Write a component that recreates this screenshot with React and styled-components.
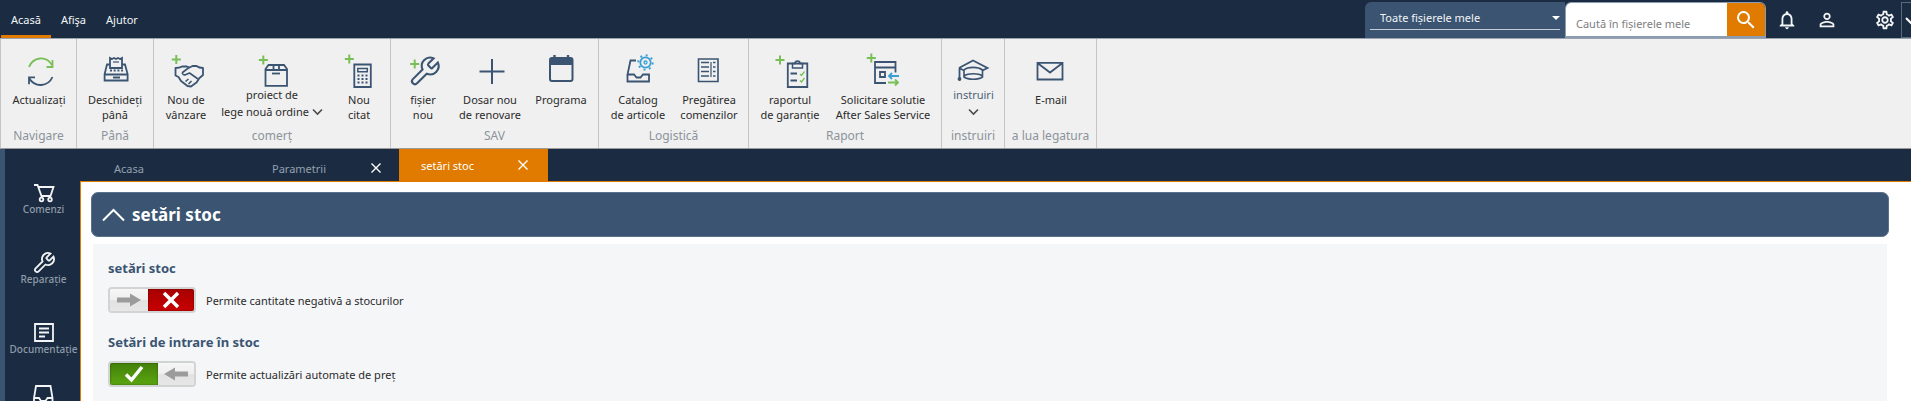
import React, { useState } from "react";
import styled, { createGlobalStyle } from "styled-components";
import {
  MdSearch,
  MdNotificationsNone,
  MdPersonOutline,
  MdOutlineSettings,
} from "react-icons/md";

const navy = "#1b2c42";
const blue = "#3a5472";
const orange = "#e07b00";
const green = "#78bf57";
const cyan = "#3c9fd4";

const GlobalStyle = createGlobalStyle`
  * {
    box-sizing: border-box;
  }

  html,
  body,
  #root {
    height: 100%;
  }

  body {
    margin: 0;
    overflow: hidden;
    font-family: "Noto Sans", "Open Sans", sans-serif;
    font-size: 11px;
    color: #2b2b2b;
  }

  button,
  input,
  select {
    margin: 0;
    padding: 0;
    border: none;
    background: none;
    font: inherit;
    color: inherit;
  }

  button {
    cursor: pointer;
  }
`;

const Page = styled.div`
  display: flex;
  flex-direction: column;
  height: 100%;
  background-color: ${navy};
`;

const Header = styled.header`
  display: flex;
  flex-shrink: 0;
  height: 38px;
  justify-content: space-between;
  color: #f2f4f6;
`;

const Menu = styled.nav`
  display: flex;
  padding-left: 1px;
`;

const MenuButton = styled.button`
  height: 38px;
  padding: 4px 10px 0;
  border-bottom: 3px solid ${(props) => (props.$active ? orange : "transparent")};
`;

const HeaderRight = styled.div`
  display: flex;
  padding-top: 2px;
`;

const FileFilter = styled.div`
  display: flex;
  width: 200px;
  padding: 0 5px 8px;
  background-color: ${blue};
  border-top-left-radius: 6px;
`;

const FilterField = styled.label`
  display: flex;
  flex: 1;
  align-items: center;
  padding-top: 4px;
  border-bottom: 1px solid #c5cdd6;
`;

const FilterSelect = styled.select`
  flex: 1;
  height: 22px;
  padding-left: 10px;
  appearance: none;
  color: #f2f4f6;
`;

const SearchForm = styled.form`
  display: flex;
  width: 201px;
  height: 36px;
  border: 1px solid #8b9bb0;
  border-bottom-width: 2px;
  border-radius: 6px 6px 0 0;
  overflow: hidden;
`;

const SearchInput = styled.input`
  flex: 1;
  min-width: 0;
  padding: 8px 10px 0;
  background-color: #fff;
  color: #333;

  &::placeholder {
    color: #808080;
    opacity: 1;
  }
`;

const SearchButton = styled.button`
  display: flex;
  width: 38px;
  align-items: center;
  justify-content: center;
  background-color: ${orange};
  color: #fff;
`;

const HeaderIcons = styled.div`
  display: flex;
  gap: 18px;
  padding-left: 10px;
`;

const IconButton = styled.button`
  display: flex;
  width: 22px;
  align-items: center;
  justify-content: center;
  margin-left: ${(props) => (props.$apart ? "18px" : "0")};
`;

const WindowButton = styled.button`
  width: 10px;
  margin-left: 5px;
  border: 1px solid #5a6a7d;
  border-right: none;
  overflow: hidden;
`;

const Ribbon = styled.div`
  display: flex;
  flex-shrink: 0;
  height: 111px;
  background-color: #f0f0f0;
  border-top: 1px solid #9aa3ad;
  border-bottom: 1px solid #9a9a9a;
  border-left: 1px solid #c4c4c4;
`;

const RibbonGroup = styled.section`
  display: flex;
  flex-direction: column;
  width: ${(props) => props.$width}px;
  border-right: 1px solid #c4c4c4;
`;

const RibbonItems = styled.div`
  display: flex;
  height: 88px;
  padding-left: 1px;
`;

const RibbonButton = styled.button`
  display: flex;
  flex-direction: column;
  align-items: center;
  flex-shrink: 0;
  width: ${(props) => props.$width}px;
  padding-top: 13px;
  line-height: ${(props) => (props.$menu ? 17 : 15)}px;
  color: ${(props) => (props.$muted ? "#4c5f78" : "#2b2b2b")};
  white-space: nowrap;
`;

const RibbonIcon = styled.svg`
  flex-shrink: 0;
  width: 40px;
  height: ${(props) => (props.$menu ? 34 : 40)}px;
  overflow: visible;
  fill: none;
  stroke: ${blue};
  stroke-width: 1.8;
`;

const GroupTitle = styled.h2`
  margin: 0;
  font-size: 12px;
  font-weight: 400;
  line-height: 18px;
  text-align: center;
  color: #8c939b;
  white-space: nowrap;
`;

const Main = styled.div`
  display: flex;
  flex: 1;
  min-height: 0;
`;

const Sidebar = styled.nav`
  display: flex;
  flex-direction: column;
  flex-shrink: 0;
  gap: 22px;
  width: 80px;
  padding: 32px 0 0 2px;
  border-left: 5px solid ${blue};
  overflow: hidden;
`;

const SidebarLink = styled.a`
  display: flex;
  flex-direction: column;
  flex-shrink: 0;
  align-items: center;
  height: 48px;
  font-size: 10px;
  font-weight: 500;
  line-height: 14px;
  color: #8f9baa;
  text-decoration: none;
`;

const SidebarIcon = styled.svg`
  flex-shrink: 0;
  width: 24px;
  height: 24px;
  margin-bottom: -3px;
  overflow: visible;
  fill: none;
  stroke: #f2f4f6;
  stroke-width: 1.8;
`;

const Workspace = styled.div`
  display: flex;
  flex: 1;
  flex-direction: column;
  min-width: 0;
`;

const Tabs = styled.div`
  display: flex;
  flex-shrink: 0;
  height: 32px;
  padding-left: 1px;
`;

const Tab = styled.div`
  display: flex;
  align-items: center;
  justify-content: space-between;
  width: ${(props) => props.$width}px;
  padding: ${(props) => (props.$active ? "0 19px 0 22px" : "6px 17px 0 33px")};
  background-color: ${(props) => (props.$active ? orange : "transparent")};
  color: ${(props) => (props.$active ? "#fff" : "#93a0b0")};
`;

const CloseButton = styled.button`
  display: flex;
  color: #fff;
`;

const Content = styled.main`
  flex: 1;
  padding: 10px 22px 0 10px;
  background-color: #fff;
  border-top: 1px solid ${orange};
  border-left: 1px solid ${orange};
  overflow: hidden;
`;

const PanelHeader = styled.button`
  display: flex;
  align-items: center;
  gap: 7px;
  width: 100%;
  height: 45px;
  padding: 0 10px;
  background-color: ${blue};
  border: 1px solid #5a718c;
  border-radius: 7px;
  font-size: 17px;
  font-weight: 700;
  color: #fff;
`;

const PanelBody = styled.div`
  height: 100%;
  margin: 7px 2px 0;
  padding: 14px 15px;
  background-color: #f5f6f8;
`;

const SettingTitle = styled.h3`
  margin: 0 0 9px;
  font-size: 13px;
  line-height: 20px;
  font-weight: 700;
  color: ${blue};
`;

const Setting = styled.label`
  display: flex;
  align-items: center;
  gap: 10px;
  height: 26px;
  margin-bottom: 19px;
  cursor: pointer;
`;

const ToggleBox = styled.span`
  position: relative;
  display: flex;
  width: 88px;
  height: 26px;
  border: 2px solid #d2d4d4;
  border-radius: 4px;
  overflow: hidden;
`;

const ToggleInput = styled.input`
  position: absolute;
  inset: 0;
  width: 100%;
  height: 100%;
  opacity: 0;
  cursor: pointer;
`;

const ToggleKnob = styled.span`
  display: flex;
  flex: 1;
  align-items: center;
  justify-content: center;
  background: linear-gradient(#f6f6f6 0%, #efefef 48%, #e3e3e3 52%, #e6e6e6 100%);
`;

const ToggleState = styled.span`
  display: flex;
  width: ${(props) => (props.$on ? 48 : 46)}px;
  align-items: center;
  justify-content: center;
  background: ${(props) =>
    props.$on ? "linear-gradient(#43800b, #5ba50f)" : "linear-gradient(#a80000, #c80000)"};
  box-shadow: inset 0 0 2px rgba(0, 0, 0, 0.5);
`;

const WRENCH =
  "M14.7 6.3a1 1 0 0 0 0 1.4l1.6 1.6a1 1 0 0 0 1.4 0l3.77-3.77a6 6 0 0 1-7.94 7.94l-6.91 6.91a2.12 2.12 0 0 1-3-3l6.91-6.91a6 6 0 0 1 7.94-7.94l-3.76 3.76z";

function Plus({ x, y }) {
  return <path d={`M${x - 4.5} ${y}h9M${x} ${y - 4.5}v9`} stroke={green} strokeWidth="2" />;
}

const icons = {
  refresh: (
    <>
      <path d="M10 15C14 5 27 3 33 13M27.5 15h6v-7" stroke={green} />
      <path d="M33.5 25C29 35 16 36 10 26M16 25.3h-6v7" />
    </>
  ),
  register: (
    <>
      <path d="M15 16V6l2 1 2-1 2 1 2-1 2 1 2-1v10z" />
      <path d="M15 12.5h-3L9.6 22v6.5h23V22L30 12.5h-3M9.6 22.5h23M18 25.5h7" />
      <path d="M15 18.5h13" strokeDasharray="2 1.7" />
      <path d="M18 10h6" strokeWidth="1.2" />
    </>
  ),
  handshake: (
    <>
      <Plus x={10.3} y={7.5} />
      <g strokeLinejoin="round">
        <path d="M9.5 16c3 0 5-.5 6.5-1.5h5l2.5 1 3-1.5h4c2 1.500 4 2 6.500 2v7l-3.500 3-3 4.500-5.500 4-3.500-.5-6.500-5-2.500-4-3-1.500z" />
        <path d="M23 15.500l-6.500 5c-.5 2 1.500 3 3.500 2l3.500-1.500 8.500 6M19.500 29.500l3-2.500M22.500 32l3-3" strokeWidth="1.6" />
      </g>
    </>
  ),
  box: (
    <>
      <Plus x={11.3} y={8} />
      <path d="M13.5 17l3-4H32l3 4v16.800H13.500zM13.500 18H35M21.500 13v5M27 13v5" />
      <path d="M20 21.500h8" />
    </>
  ),
  calculator: (
    <>
      <Plus x={10.3} y={7} />
      <path d="M15.300 12.500h16.500V35H15.300z" />
      <path d="M18.800 16.500h9.500v3.300h-9.500z" strokeWidth="1.5" />
      <path d="M18.500 23.500h11M18.500 27h11M18.500 30.500h11" strokeDasharray="2 2" />
    </>
  ),
  wrench: (
    <>
      <Plus x={11.7} y={12} />
      <path d={WRENCH} transform="translate(4.8 2.8) scale(1.4)" strokeWidth="1.5" />
    </>
  ),
  plus: <path d="M9.5 19.5h25M22 7v25" strokeWidth="2" />,
  calendar: (
    <>
      <rect x="9" y="6" width="22.5" height="23" rx="2" strokeWidth="2" />
      <path d="M9 10h22.5" strokeWidth="6" />
      <path d="M13.500 3v5M27 3v5" strokeWidth="2.4" />
    </>
  ),
  catalog: (
    <>
      <path d="M18 8.500h-5.500l-3 14h6.500l2.500 3h4l2.500-3H31v7H9.500v-7" />
      <circle cx="27.5" cy="10.5" r="5.2" stroke={cyan} />
      <circle cx="27.5" cy="10.5" r="1.5" stroke={cyan} strokeWidth="1.3" />
      <circle cx="27.5" cy="10.5" r="7.2" stroke={cyan} strokeWidth="2" strokeDasharray="2 3.655" />
    </>
  ),
  orders: (
    <>
      <path d="M9.500 7H29v22.500H9.500z" strokeWidth="1.6" />
      <path d="M12 10.500h8M12 15h8M12 19.500h8M12 24h8M24 10.500h2.500M24 15h2.500M24 19.500h2.500M24 24h2.500" strokeWidth="1.5" />
      <path d="M22 10v15" strokeWidth="1.2" />
    </>
  ),
  warranty: (
    <>
      <Plus x={10} y={8} />
      <path d="M17.800 11.500h19.500V35H17.800z" />
      <path d="M22.500 11.500V16h10v-4.500H30a2.500 2.500 0 0 0-5 0z" strokeWidth="1.5" />
      <path d="M20.500 21.500H27M20.500 28.500H27" />
      <path d="M30 22l1.500 1.500 3-4M30 28.500l1.500 1.500 3-4" stroke={green} strokeWidth="1.3" />
    </>
  ),
  afterSales: (
    <>
      <Plus x={8.3} y={6} />
      <path d="M23 31H12V10h20.500v10.500M12 15.500h20.500M17 20h5v5h-5z" />
      <path d="M36 24H27M29 21l-3 3 3 3" stroke={cyan} />
      <path d="M25 30.500h9M32 27.500l3 3-3 3" stroke={green} />
    </>
  ),
  training: (
    <>
      <path d="M5 16l14-7.500L33.500 16l-5 2.500M5 16l5 2.500" />
      <path d="M10 25v-7c4-3.500 14-3.500 18.500 0v7c-4 3-14.500 3-18.500 0zM10 24c4-3 14.500-3 18.500 0" strokeWidth="1.6" />
      <path d="M5.500 16.500v11" />
      <circle cx="5.500" cy="27" r="1" />
    </>
  ),
  mail: <path d="M6.500 10.800h25V27.500h-25zM6.500 11L19 20.500 31.500 11" />,
};

const groups = [
  {
    title: "Navigare",
    width: 76,
    items: [{ icon: "refresh", lines: ["Actualizați"], width: 74 }],
  },
  {
    title: "Până",
    width: 77,
    items: [{ icon: "register", lines: ["Deschideți", "până"], width: 74 }],
  },
  {
    title: "comerț",
    width: 237,
    items: [
      { icon: "handshake", lines: ["Nou de", "vânzare"], width: 62 },
      { icon: "box", lines: ["proiect de", "lege nouă ordine"], width: 110, menu: true },
      { icon: "calculator", lines: ["Nou", "citat"], width: 64 },
    ],
  },
  {
    title: "SAV",
    width: 208,
    items: [
      { icon: "wrench", lines: ["fișier", "nou"], width: 62 },
      { icon: "plus", lines: ["Dosar nou", "de renovare"], width: 72 },
      { icon: "calendar", lines: ["Programa"], width: 70 },
    ],
  },
  {
    title: "Logistică",
    width: 150,
    items: [
      { icon: "catalog", lines: ["Catalog", "de articole"], width: 76 },
      { icon: "orders", lines: ["Pregătirea", "comenzilor"], width: 66 },
    ],
  },
  {
    title: "Raport",
    width: 193,
    items: [
      { icon: "warranty", lines: ["raportul", "de garanție"], width: 80 },
      { icon: "afterSales", lines: ["Solicitare solutie", "After Sales Service"], width: 106 },
    ],
  },
  {
    title: "instruiri",
    width: 63,
    items: [{ icon: "training", lines: ["instruiri", ""], width: 61, menu: true, muted: true }],
  },
  {
    title: "a lua legatura",
    width: 92,
    items: [{ icon: "mail", lines: ["E-mail"], width: 90 }],
  },
];

const sidebarItems = [
  {
    id: "orders",
    label: "Comenzi",
    icon: (
      <>
        <path d="M2 4h3.500l4 11h9l3-9H6.500" />
        <circle cx="9.5" cy="18.500" r="1.800" />
        <circle cx="18" cy="18.500" r="1.800" />
      </>
    ),
  },
  { id: "repair", label: "Reparație", icon: <path d={WRENCH} /> },
  {
    id: "docs",
    label: "Documentație",
    icon: <path d="M3 3h18v17H3zM7 7.500h10M7 11.500h10M7 15.500h6" />,
  },
  {
    id: "tray",
    icon: <path d="M4-5h14.500l2 12v9H2V7zM2 7h5l2 3h4.500l2-3h5" />,
  },
];

function Chevron() {
  return (
    <svg width="11" height="8" viewBox="0 0 11 8" fill="none" stroke="#4a4a4a" strokeWidth="1.6">
      <path d="M1 1.500l4.500 4.500L10 1.500" />
    </svg>
  );
}

function Close() {
  return (
    <svg width="12" height="12" viewBox="0 0 12 12" fill="none" stroke="currentColor" strokeWidth="1.4">
      <path d="M1.500 1.500l9 9M10.500 1.500l-9 9" />
    </svg>
  );
}

function Arrow({ left }) {
  return (
    <svg width="24" height="14" viewBox="0 0 24 14" fill="#9b9b9b">
      <path d={left ? "M0 7l11-6.5V4.500h13v5H11v4z" : "M24 7L13 .5V4.500H0v5h13v4z"} />
    </svg>
  );
}

function Toggle({ label, defaultOn }) {
  const [on, setOn] = useState(defaultOn);

  return (
    <Setting>
      <ToggleBox>
        {on ? (
          <>
            <ToggleState $on>
              <svg width="20" height="18" viewBox="0 0 20 18" fill="none" stroke="#fff" strokeWidth="3.5">
                <path d="M2 9.500l5.500 5.500L18 2" />
              </svg>
            </ToggleState>
            <ToggleKnob>
              <Arrow left />
            </ToggleKnob>
          </>
        ) : (
          <>
            <ToggleKnob>
              <Arrow />
            </ToggleKnob>
            <ToggleState>
              <svg width="18" height="18" viewBox="0 0 18 18" fill="none" stroke="#fff" strokeWidth="3.5">
                <path d="M2 2l14 14M16 2L2 16" />
              </svg>
            </ToggleState>
          </>
        )}
        <ToggleInput type="checkbox" checked={on} onChange={(e) => setOn(e.target.checked)} />
      </ToggleBox>
      {label}
    </Setting>
  );
}

function RibbonItem({ item }) {
  const { icon, lines, width, menu, muted } = item;

  return (
    <RibbonButton $width={width} $menu={menu} $muted={muted}>
      <RibbonIcon $menu={menu}>{icons[icon]}</RibbonIcon>
      <span>{lines[0]}</span>
      {lines.length > 1 && (
        <span>
          {lines[1]} {menu && <Chevron />}
        </span>
      )}
    </RibbonButton>
  );
}

export default function App() {
  const [search, setSearch] = useState("");
  const [open, setOpen] = useState(true);

  return (
    <Page>
      <GlobalStyle />
      <Header>
        <Menu>
          <MenuButton $active>Acasă</MenuButton>
          <MenuButton>Afişa</MenuButton>
          <MenuButton>Ajutor</MenuButton>
        </Menu>
        <HeaderRight>
          <FileFilter>
            <FilterField>
              <FilterSelect aria-label="Fișiere">
                <option>Toate fișierele mele</option>
              </FilterSelect>
              <svg width="8" height="4" viewBox="0 0 8 4" fill="#fff">
                <path d="M0 0h8L4 4z" />
              </svg>
            </FilterField>
          </FileFilter>
          <SearchForm onSubmit={(e) => e.preventDefault()}>
            <SearchInput
              type="text"
              aria-label="Caută"
              placeholder="Caută în fișierele mele"
              value={search}
              onChange={(e) => setSearch(e.target.value)}
            />
            <SearchButton aria-label="Caută">
              <MdSearch size={24} />
            </SearchButton>
          </SearchForm>
          <HeaderIcons>
            <IconButton aria-label="Notificări">
              <MdNotificationsNone size={22} />
            </IconButton>
            <IconButton aria-label="Cont">
              <MdPersonOutline size={22} />
            </IconButton>
            <IconButton aria-label="Setări" $apart>
              <MdOutlineSettings size={22} />
            </IconButton>
          </HeaderIcons>
          <WindowButton aria-label="Mai mult">
            <svg width="14" height="8" viewBox="0 0 14 8" fill="none" stroke="#fff" strokeWidth="2">
              <path d="M4 1l5 5 5-5" />
            </svg>
          </WindowButton>
        </HeaderRight>
      </Header>

      <Ribbon>
        {groups.map((group) => (
          <RibbonGroup key={group.title} $width={group.width}>
            <RibbonItems>
              {group.items.map((item) => (
                <RibbonItem key={item.icon} item={item} />
              ))}
            </RibbonItems>
            <GroupTitle>{group.title}</GroupTitle>
          </RibbonGroup>
        ))}
      </Ribbon>

      <Main>
        <Sidebar>
          {sidebarItems.map((item) => (
            <SidebarLink key={item.id} href={`#${item.id}`}>
              <SidebarIcon viewBox="0 0 24 24">{item.icon}</SidebarIcon>
              {item.label}
            </SidebarLink>
          ))}
        </Sidebar>
        <Workspace>
          <Tabs>
            <Tab $width={158}>Acasa</Tab>
            <Tab $width={160}>
              Parametrii
              <CloseButton aria-label="Închide Parametrii">
                <Close />
              </CloseButton>
            </Tab>
            <Tab $width={149} $active>
              setări stoc
              <CloseButton aria-label="Închide setări stoc">
                <Close />
              </CloseButton>
            </Tab>
          </Tabs>
          <Content>
            <PanelHeader aria-expanded={open} onClick={() => setOpen(!open)}>
              <svg width="23" height="14" viewBox="0 0 23 14" fill="none" stroke="#fff" strokeWidth="2">
                <path d={open ? "M1 12.500L11.500 2 22 12.500" : "M1 2l10.500 10.500L22 2"} />
              </svg>
              setări stoc
            </PanelHeader>
            {open && (
              <PanelBody>
                <SettingTitle>setări stoc</SettingTitle>
                <Toggle label="Permite cantitate negativă a stocurilor" defaultOn={false} />
                <SettingTitle>Setări de intrare în stoc</SettingTitle>
                <Toggle label="Permite actualizări automate de preț" defaultOn />
              </PanelBody>
            )}
          </Content>
        </Workspace>
      </Main>
    </Page>
  );
}
